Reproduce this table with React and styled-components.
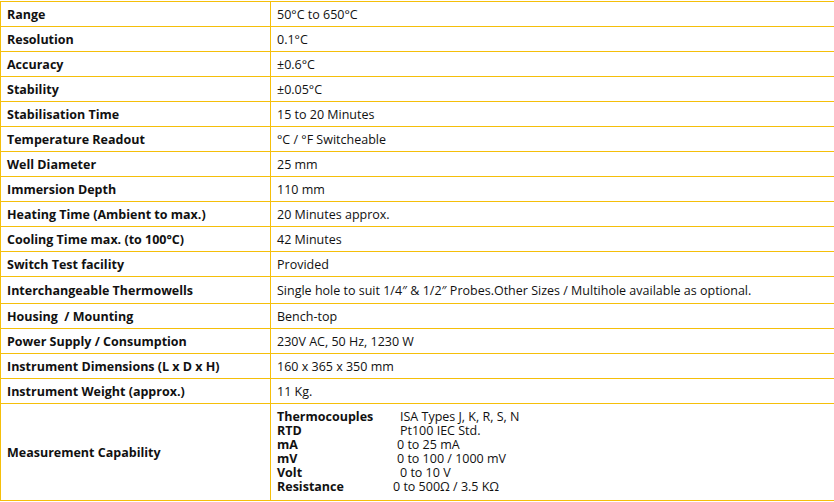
import { Fragment } from "react";
import styled, { createGlobalStyle } from "styled-components";

const GlobalStyle = createGlobalStyle`
  body {
    margin: 0;
    padding-top: 1px;
    overflow: hidden;
    background: #fff;
    font-family: "Open Sans", "Noto Sans", sans-serif;
  }
`;

const specs = [
  ["Range", "50°C to 650°C"],
  ["Resolution", "0.1°C"],
  ["Accuracy", "±0.6°C"],
  ["Stability", "±0.05°C"],
  ["Stabilisation Time", "15 to 20 Minutes"],
  ["Temperature Readout", "°C / °F Switcheable"],
  ["Well Diameter", "25 mm"],
  ["Immersion Depth", "110 mm"],
  ["Heating Time (Ambient to max.)", "20 Minutes approx."],
  ["Cooling Time max. (to 100°C)", "42 Minutes"],
  ["Switch Test facility", "Provided"],
  [
    "Interchangeable Thermowells",
    "Single hole to suit 1/4″ & 1/2″ Probes.Other Sizes / Multihole available as optional.",
    25,
  ],
  ["Housing  / Mounting", "Bench-top"],
  ["Power Supply / Consumption", "230V AC, 50 Hz, 1230 W"],
  ["Instrument Dimensions (L x D x H)", "160 x 365 x 350 mm"],
  ["Instrument Weight (approx.)", "11 Kg."],
];

const capability = [
  ["Thermocouples", "ISA Types J, K, R, S, N", 7],
  ["RTD", "Pt100 IEC Std.", 7],
  ["mA", "0 to 25 mA", 4],
  ["mV", "0 to 100 / 1000 mV", 4],
  ["Volt", "0 to 10 V", 7],
  ["Resistance", "0 to 500Ω / 3.5 KΩ", 0],
];

const Table = styled.table`
  width: 860px;
  border-collapse: collapse;
  font-size: 12.5px;
  color: #111;
`;

const Cell = styled.td`
  border: 1px solid #f5bf0a;
  height: ${(p) => p.$h || 23}px;
  padding: 1px 6px 0;
  vertical-align: middle;
  white-space: pre;
  line-height: 14px;
`;

const Label = styled(Cell)`
  width: 257px;
  font-weight: 700;
`;

const CapGrid = styled.div`
  display: grid;
  grid-template-columns: 116px auto;
  padding: 5px 0 6px;
  line-height: 14px;
`;

const CapName = styled.span`
  font-weight: 700;
`;

const CapValue = styled.span`
  padding-left: ${(p) => p.$shift}px;
`;

export default function App() {
  return (
    <>
      <GlobalStyle />
      <Table>
        <tbody>
          {specs.map(([k, v, h]) => (
            <tr key={k}>
              <Label $h={h}>{k}</Label>
              <Cell $h={h}>{v}</Cell>
            </tr>
          ))}
          <tr>
            <Label $h={95}>Measurement Capability</Label>
            <Cell $h={95}>
              <CapGrid>
                {capability.map(([k, v, s]) => (
                  <Fragment key={k}>
                    <CapName>{k}</CapName>
                    <CapValue $shift={s}>{v}</CapValue>
                  </Fragment>
                ))}
              </CapGrid>
            </Cell>
          </tr>
        </tbody>
      </Table>
    </>
  );
}
